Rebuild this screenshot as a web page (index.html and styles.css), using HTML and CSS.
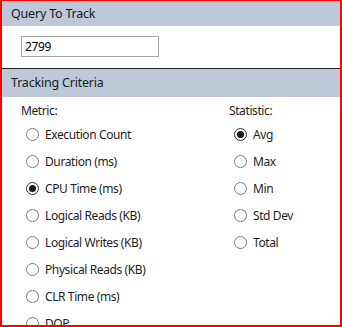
FILE: index.html
```html
<!DOCTYPE html>
<html lang="en">
<head>
    <meta charset="UTF-8">
    <meta name="viewport" content="width=device-width, initial-scale=1.0">
    <title>Query To Track</title>
    <link rel="stylesheet" href="styles.css">
</head>
<body>
    <div class="panel">
        <div class="section">
            <div class="section-header">Query To Track</div>
            <div class="section-body">
                <input class="query-input" type="text" value="2799">
            </div>
        </div>
        <div class="section criteria">
            <div class="section-header">Tracking Criteria</div>
            <div class="criteria-body">
                <div class="group metric">
                    <div class="group-label">Metric:</div>
                    <label class="option"><span class="radio"></span>Execution Count</label>
                    <label class="option"><span class="radio"></span>Duration (ms)</label>
                    <label class="option"><span class="radio checked"></span>CPU Time (ms)</label>
                    <label class="option"><span class="radio"></span>Logical Reads (KB)</label>
                    <label class="option"><span class="radio"></span>Logical Writes (KB)</label>
                    <label class="option"><span class="radio"></span>Physical Reads (KB)</label>
                    <label class="option"><span class="radio"></span>CLR Time (ms)</label>
                    <label class="option"><span class="radio"></span>DOP</label>
                </div>
                <div class="group statistic">
                    <div class="group-label">Statistic:</div>
                    <label class="option"><span class="radio checked"></span>Avg</label>
                    <label class="option"><span class="radio"></span>Max</label>
                    <label class="option"><span class="radio"></span>Min</label>
                    <label class="option"><span class="radio"></span>Std Dev</label>
                    <label class="option"><span class="radio"></span>Total</label>
                </div>
            </div>
        </div>
    </div>
</body>
</html>
```

FILE: styles.css
```css
* {
    box-sizing: border-box;
    margin: 0;
    padding: 0;
}
body {
    background-color: #ffffff;
    font-family: "Segoe UI", "Noto Sans", "Open Sans", sans-serif;
    font-size: 12px;
    letter-spacing: -0.4px;
    color: #1e1e1e;
}
.panel {
    width: 342px;
    height: 327px;
    border: 2px solid #ff0000;
    border-top-width: 1px;
    overflow: hidden;
    background-color: #ffffff;
}
.section-header {
    height: 25px;
    line-height: 25px;
    padding-left: 9px;
    background-color: #bdc8d8;
    color: #1a1a1a;
    font-size: 12.5px;
    letter-spacing: -0.2px;
}
.criteria .section-header {
    height: 28px;
    line-height: 28px;
}
.section-body {
    height: 43px;
    padding: 10px 0 0 19px;
    border-bottom: 1px solid #222222;
}
.query-input {
    width: 138px;
    height: 21px;
    border: 1px solid #a6a6a6;
    padding: 0 3px;
    font-family: inherit;
    font-size: 12px;
    letter-spacing: inherit;
    color: #000000;
    outline: none;
}
.criteria-body {
    display: flex;
    padding: 4px 0 0 19px;
}
.metric {
    width: 208px;
}
.group-label {
    height: 20px;
    line-height: 20px;
}
.option {
    display: flex;
    align-items: center;
    height: 27px;
    padding-left: 5px;
    gap: 6px;
}
.radio {
    width: 13px;
    height: 13px;
    border: 1px solid #7a7a7a;
    border-radius: 50%;
    display: flex;
    align-items: center;
    justify-content: center;
}
.radio.checked {
    border-color: #333333;
}
.radio.checked::after {
    content: "";
    width: 7px;
    height: 7px;
    border-radius: 50%;
    background-color: #1a1a1a;
}
```
